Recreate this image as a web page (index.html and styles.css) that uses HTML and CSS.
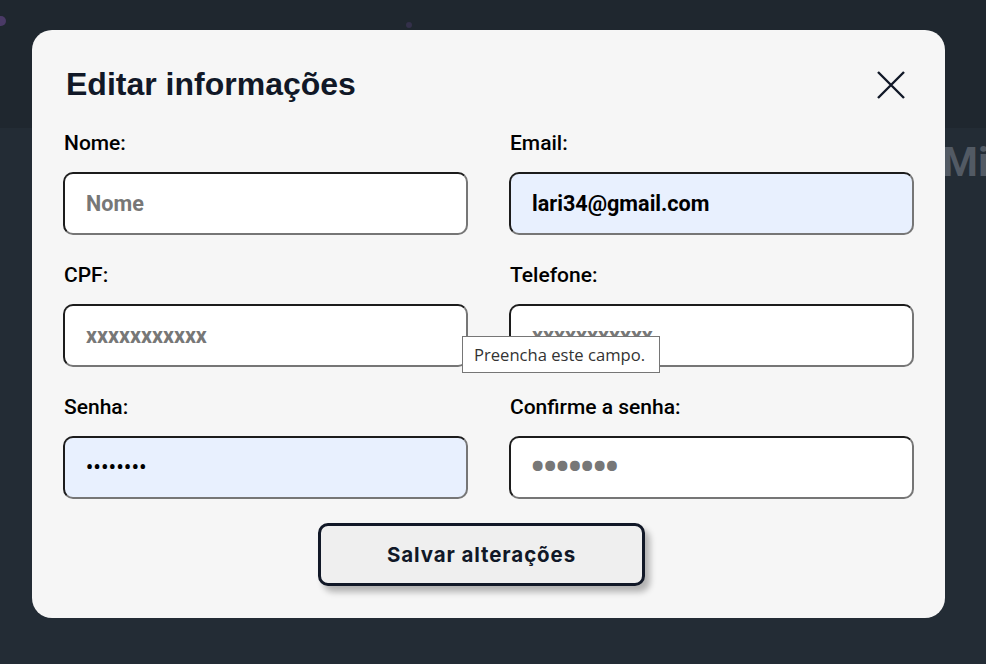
FILE: index.html
```html
<!DOCTYPE html>
<html lang="pt-BR">
<head>
<meta charset="utf-8">
<title>Editar informações</title>
<link rel="stylesheet" href="styles.css">
</head>
<body>
<div class="page">
  <header class="topbar">
    <span class="dot dot-purple"></span>
    <span class="dot dot-faint"></span>
  </header>
  <main class="content">
    <h1 class="page-title">Minha conta</h1>
  </main>
</div>

<div class="modal">
  <div class="modal-head">
    <h2 class="modal-title">Editar informações</h2>
    <button class="close" aria-label="Fechar">
      <svg width="30" height="30" viewBox="0 0 30 30"><path d="M2 2 L28 28 M28 2 L2 28" stroke="#111827" stroke-width="2.4" fill="none"/></svg>
    </button>
  </div>
  <form class="grid">
    <div class="field">
      <label>Nome:</label>
      <div class="input placeholder">Nome</div>
    </div>
    <div class="field">
      <label>Email:</label>
      <div class="input filled autofill">lari34@gmail.com</div>
    </div>
    <div class="field">
      <label>CPF:</label>
      <div class="input placeholder">xxxxxxxxxxx</div>
    </div>
    <div class="field">
      <label>Telefone:</label>
      <div class="input placeholder">xxxxxxxxxxx</div>
    </div>
    <div class="field">
      <label>Senha:</label>
      <div class="input filled autofill dots">••••••••</div>
    </div>
    <div class="field">
      <label>Confirme a senha:</label>
      <div class="input placeholder bigdots">•••••••</div>
    </div>
  </form>
  <div class="actions">
    <button class="save">Salvar alterações</button>
  </div>
  <div class="tooltip">Preencha este campo.</div>
</div>
</body>
</html>
```

FILE: styles.css
```css
* { box-sizing: border-box; }
html, body { margin: 0; padding: 0; }
body {
  width: 986px;
  height: 664px;
  overflow: hidden;
  background: #232c35;
  font-family: Roboto, "Liberation Sans", sans-serif;
}
.page { height: 664px; }
.topbar {
  position: relative;
  height: 128px;
  background: #1f272f;
}
.dot { position: absolute; border-radius: 50%; }
.dot-purple { left: -4px; top: 16px; width: 10px; height: 10px; background: #4a3a66; }
.dot-faint { left: 406px; top: 22px; width: 6px; height: 6px; background: #33304a; }
.content {
  width: 986px;
  padding-left: 942px;
  padding-top: 10px;
  white-space: nowrap;
  overflow: hidden;
}
.page-title {
  margin: 0;
  font-family: Roboto, sans-serif;
  font-weight: 700;
  font-size: 41px;
  color: #525a64;
}

.modal {
  position: absolute;
  left: 32px;
  top: 30px;
  width: 913px;
  height: 588px;
  background: #f6f6f6;
  border-radius: 20px;
  padding: 36px 31px 0 31px;
}
.modal-head {
  display: flex;
  justify-content: space-between;
  align-items: center;
  height: 36px;
  margin-bottom: 29px;
}
.modal-title {
  margin: 0 0 0 3px;
  font-family: "Liberation Sans", Arial, sans-serif;
  font-weight: 700;
  font-size: 32px;
  color: #111827;
}
.close {
  border: 0;
  background: none;
  padding: 0;
  width: 30px;
  height: 30px;
  margin-right: 8px;
  margin-top: 2px;
}
.grid {
  display: grid;
  grid-template-columns: 405px 405px;
  column-gap: 41px;
  row-gap: 28px;
}
.field label {
  display: block;
  font-family: Roboto, sans-serif;
  font-weight: 500;
  font-size: 21px;
  line-height: 24px;
  color: #000;
  margin-bottom: 17px;
  margin-left: 1px;
}
.input {
  height: 63px;
  border: 2px solid;
  border-color: #1c1c1c #767676 #767676 #1c1c1c;
  border-radius: 10px;
  background: #fff;
  padding: 0 21px;
  display: flex;
  align-items: center;
  font-family: Roboto, sans-serif;
  font-weight: 700;
  font-size: 21.6px;
  color: #000;
}
.input.placeholder { color: #777; }
.input.autofill { background: #e8f0fe; }
.input.dots { font-size: 19.5px; letter-spacing: 0.6px; }
.input.bigdots {
  font-size: 42px;
  line-height: 1;
  letter-spacing: -2.7px;
  color: #777;
  padding-left: 19px;
}
.actions {
  display: flex;
  justify-content: center;
  margin-top: 24px;
  padding-right: 14px;
}
.save {
  width: 327px;
  height: 63px;
  border: 3px solid #111827;
  border-radius: 10px;
  background: #efefef;
  box-shadow: 5px 6px 6px rgba(0,0,0,0.28);
  font-family: Inter, "Open Sans", sans-serif;
  font-weight: 700;
  font-size: 20.5px;
  letter-spacing: 0.9px;
  color: #111827;
}
.tooltip {
  position: absolute;
  left: 430px;
  top: 306px;
  width: 198px;
  height: 37px;
  background: #fff;
  border: 1px solid #767676;
  font-family: "Open Sans", "Noto Sans", sans-serif;
  font-size: 16.6px;
  color: #333;
  padding: 0 0 0 11px;
  display: flex;
  align-items: center;
  white-space: nowrap;
}
```
